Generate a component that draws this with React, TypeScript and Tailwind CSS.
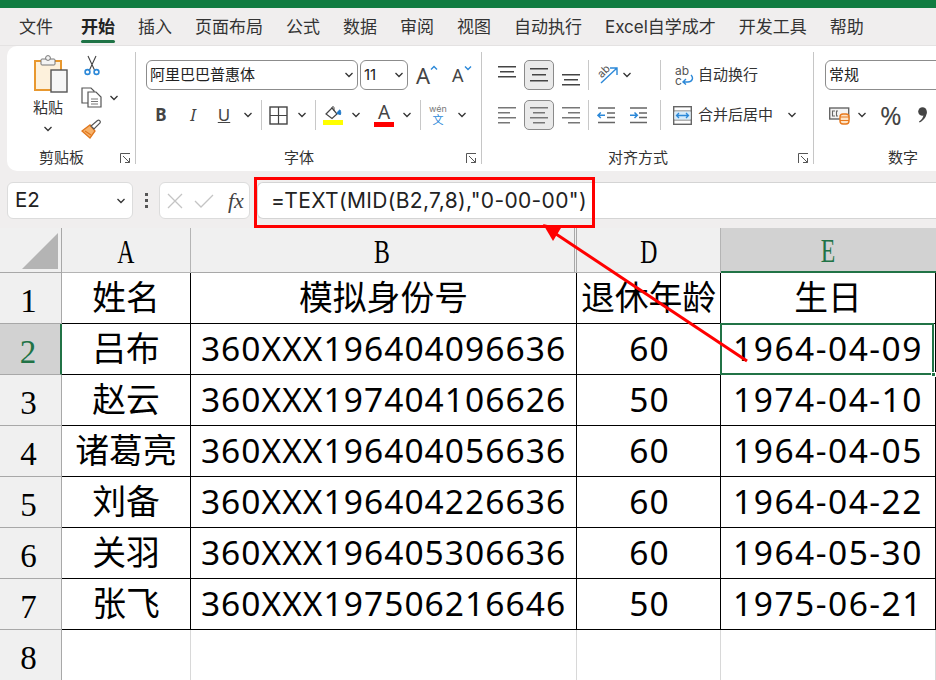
import React from "react";

const CJK = "font-['Inter','Noto_Sans_CJK_SC',sans-serif]";

function Chev({ className = "" }: { className?: string }) {
  return (
    <svg width="10" height="6" viewBox="0 0 10 6" className={"shrink-0 " + className}>
      <path d="M1.5 1 L5 4.5 L8.5 1" fill="none" stroke="#333" strokeWidth="1.3" />
    </svg>
  );
}

function Launcher() {
  return (
    <svg width="11" height="11" viewBox="0 0 11 11" className="shrink-0">
      <path d="M0.5 10 V0.5 H10" fill="none" stroke="#555" strokeWidth="1" />
      <path d="M3 3 L9.5 9.5 M5 9.5 H9.5 V5" fill="none" stroke="#555" strokeWidth="1" />
    </svg>
  );
}

function VSep({ h = "h-[30px]" }: { h?: string }) {
  return <div className={"w-px bg-[#c8c8c8] shrink-0 " + h} />;
}

function Lines({ rows, box = false, color = "#444" }: { rows: [number, number, number][]; box?: boolean; color?: string }) {
  return (
    <div className={"w-[30px] h-[30px] flex items-center justify-center shrink-0 rounded-[5px] " + (box ? "bg-[#eaeaea] border border-[#8a8a8a]" : "")}>
      <svg width="20" height="24" viewBox="0 0 20 24">
        {rows.map(([x, y, w], i) => (
          <rect key={i} x={x} y={y} width={w} height="1.5" fill={color} />
        ))}
      </svg>
    </div>
  );
}

function PasteIcon() {
  return (
    <svg width="36" height="40" viewBox="0 0 36 40">
      <rect x="2" y="6" width="26" height="29" fill="#fdf1dc" stroke="#e8982f" strokeWidth="2" />
      <rect x="8" y="4" width="14" height="6" rx="1" fill="#f4f4f4" stroke="#777" strokeWidth="1" />
      <circle cx="15" cy="3" r="2.4" fill="#f4f4f4" stroke="#777" />
      <rect x="18" y="15" width="16" height="22" fill="#f6f6f6" stroke="#555" strokeWidth="1.4" />
    </svg>
  );
}

function Scissors() {
  return (
    <svg width="16" height="21" viewBox="0 0 16 21">
      <path d="M4 1 L10.5 15 M12 1 L5.5 15" fill="none" stroke="#444" strokeWidth="1.1" />
      <circle cx="3.5" cy="17" r="2.4" fill="none" stroke="#2b88d8" strokeWidth="1.6" />
      <circle cx="12.5" cy="17" r="2.4" fill="none" stroke="#2b88d8" strokeWidth="1.6" />
    </svg>
  );
}

function CopyIcon() {
  return (
    <svg width="21" height="21" viewBox="0 0 21 21">
      <path d="M1 1 H10 L13 4 V16 H1 Z" fill="#fff" stroke="#555" strokeWidth="1.2" />
      <path d="M7 5 H15 L20 10 V20 H7 Z" fill="#fff" stroke="#555" strokeWidth="1.2" />
      <path d="M10 12 H17 M10 14.5 H17 M10 17 H17" stroke="#777" strokeWidth="1" />
    </svg>
  );
}

function Brush() {
  return (
    <svg width="21" height="20" viewBox="0 0 21 20">
      <path d="M1 12 L9 6 L14 12 L9 19 Z" fill="#f6b26b" stroke="#e0761c" strokeWidth="1.3" />
      <path d="M4 12 L10 16" stroke="#e0761c" strokeWidth="1.2" />
      <path d="M10 7 L13 10 L19 4 C20 2 18 0.5 16.5 1.5 Z" fill="#fff" stroke="#555" strokeWidth="1.2" />
    </svg>
  );
}

function BordersIcon() {
  return (
    <svg width="19" height="19" viewBox="0 0 19 19">
      <rect x="1" y="1" width="17" height="17" fill="none" stroke="#444" strokeWidth="1.4" />
      <path d="M9.5 1 V18 M1 9.5 H18" stroke="#444" strokeWidth="1.2" />
    </svg>
  );
}

function FillIcon() {
  return (
    <svg width="20" height="21" viewBox="0 0 20 21">
      <path d="M3 9 L9 3 L14 9 L9 13.5 Z" fill="#fff" stroke="#444" strokeWidth="1.2" />
      <path d="M9 3 C9 1 11 1 11 3 V6" fill="none" stroke="#444" strokeWidth="1" />
      <path d="M14 9 C15 6 16 5 17 5 C18 7 18 9 17 10" fill="#1f78c8" stroke="#1f78c8" />
      <rect x="0" y="15" width="20" height="5" fill="#ffff00" />
    </svg>
  );
}

function OrientIcon() {
  return (
    <div className="relative w-[22px] h-[20px]">
      <span className="absolute left-[1px] top-[-1px] text-[11px] leading-[14px] text-[#555] -rotate-[45deg]">ab</span>
      <svg width="22" height="20" viewBox="0 0 22 20" className="absolute left-0 top-0">
        <path d="M5 18 L21 3 M14 3 H21 V10" fill="none" stroke="#2b88d8" strokeWidth="1.4" />
      </svg>
    </div>
  );
}

function Indent({ inc }: { inc?: boolean }) {
  return (
    <svg width="18" height="18" viewBox="0 0 18 18">
      <path d="M1 2 H18 M1 16.5 H18 M10 7 H18 M10 11.5 H18" stroke="#666" strokeWidth="1.5" />
      {inc ? (
        <path d="M1 9.3 H8 M5.5 6.5 L8.3 9.3 L5.5 12" fill="none" stroke="#2b88d8" strokeWidth="1.5" />
      ) : (
        <path d="M8 9.3 H1 M3.8 6.5 L1 9.3 L3.8 12" fill="none" stroke="#2b88d8" strokeWidth="1.5" />
      )}
    </svg>
  );
}

function WrapIcon() {
  return (
    <div className="relative w-[19px] h-[19px]">
      <div className="w-[15px] text-[12px] leading-[10px] text-[#555]">ab c</div>
      <svg width="19" height="19" viewBox="0 0 19 19" className="absolute left-0 top-0">
        <path d="M16 9 C19 12 17 16 13 16 H8 M11 13 L8 16 L11 18.5" fill="none" stroke="#2b88d8" strokeWidth="1.4" />
      </svg>
    </div>
  );
}

function MergeIcon() {
  return (
    <svg width="19" height="19" viewBox="0 0 19 19">
      <rect x="0.7" y="0.7" width="17.6" height="17.6" fill="#fff" stroke="#666" strokeWidth="1.4" />
      <path d="M1 5 H18 M1 14 H18" stroke="#666" strokeWidth="1.2" />
      <rect x="1.5" y="5.5" width="16" height="8" fill="#d6ebfa" />
      <path d="M3.5 9.5 H15.5 M6 7 L3.5 9.5 L6 12 M13 7 L15.5 9.5 L13 12" fill="none" stroke="#2b88d8" strokeWidth="1.3" />
    </svg>
  );
}

function CurrencyIcon() {
  return (
    <svg width="21" height="20" viewBox="0 0 21 20">
      <rect x="0.7" y="3" width="19" height="11" fill="#f4f4f4" stroke="#666" strokeWidth="1.4" />
      <path d="M6 6 H3.5 V11 H6 M9 6 H7.5 V11 H9" fill="none" stroke="#666" strokeWidth="1.1" />
      <rect x="11" y="9" width="9" height="10" rx="3" fill="#fde3c5" stroke="#e8791c" strokeWidth="1.4" />
      <path d="M11 12 H20 M11 15.5 H20" stroke="#e8791c" strokeWidth="1.2" />
    </svg>
  );
}

function CommaIcon() {
  return (
    <svg width="11" height="16" viewBox="0 0 11 16">
      <circle cx="5.5" cy="4.5" r="4.3" fill="#444" />
      <path d="M9.8 4.5 C10 9 7 13.5 2.5 15.5 L2 14.5 C5 12.5 6.5 10 6.5 7.5 Z" fill="#444" />
    </svg>
  );
}

function Combo({ text, className, chev = true }: { text: string; className: string; chev?: boolean }) {
  return (
    <div className={"h-[30px] bg-white border border-[#8c8c8c] rounded-[6px] flex items-center justify-between pl-[3px] pr-[3px] text-[15px] text-[#222] " + className}>
      <span>{text}</span>
      {chev && <Chev />}
    </div>
  );
}

function Group({ width, label, launcher = true, sep = true, children }: { width: string; label: string; launcher?: boolean; sep?: boolean; children: React.ReactNode }) {
  return (
    <div className={"relative flex flex-col shrink-0 h-full " + width}>
      <div className="flex-1 min-h-0">{children}</div>
      <div className={"h-[23px] flex items-start justify-center text-[15px] leading-[20px] text-[#333] " + (launcher ? "pr-[20px]" : "")}>{label}</div>
      {launcher && (
        <div className="absolute right-[5px] bottom-[7px]">
          <Launcher />
        </div>
      )}
      {sep && <div className="absolute right-0 top-[6px] bottom-[7px] w-px bg-[#c6c6c6]" />}
    </div>
  );
}

const tabs = ["文件", "开始", "插入", "页面布局", "公式", "数据", "审阅", "视图", "自动执行", "Excel自学成才", "开发工具", "帮助"];

const topA: [number, number, number][] = [[1, 3, 18], [3, 8, 14], [1, 13, 18]];
const midA: [number, number, number][] = [[1, 5, 18], [3, 11, 14], [1, 17, 18]];
const botA: [number, number, number][] = [[1, 11, 18], [3, 16, 14], [1, 21, 18]];
const leftA: [number, number, number][] = [[1, 4, 18], [1, 9, 12], [1, 14, 18], [1, 19, 12]];
const centerA: [number, number, number][] = [[1, 4, 18], [4, 9, 12], [1, 14, 18], [4, 19, 12]];
const rightA: [number, number, number][] = [[1, 4, 18], [7, 9, 12], [1, 14, 18], [7, 19, 12]];

const rows: [string, string, string, string][] = [
  ["吕布", "360XXX196404096636", "60", "1964-04-09"],
  ["赵云", "360XXX197404106626", "50", "1974-04-10"],
  ["诸葛亮", "360XXX196404056636", "60", "1964-04-05"],
  ["刘备", "360XXX196404226636", "60", "1964-04-22"],
  ["关羽", "360XXX196405306636", "60", "1964-05-30"],
  ["张飞", "360XXX197506216646", "50", "1975-06-21"],
];

function ColHead({ ch, active, sep = "border-r border-[#b4b4b4]" }: { ch: string; active?: boolean; sep?: string }) {
  return (
    <div className={"flex items-center justify-center border-b " + (active ? "bg-[#d2d2d2] border-[#217346] border-b-2 text-[#217346]" : "bg-[#f0f0f0] border-[#a8a8a8] text-black " + sep)}>
      <span className="font-['Liberation_Serif',serif] text-[33px] leading-none scale-x-[0.72] mt-[4px]">{ch}</span>
    </div>
  );
}

function RowHead({ n, active }: { n: number; active?: boolean }) {
  return (
    <div className={"flex items-center justify-center pr-[4px] border-b border-r border-[#a8a8a8] " + (active ? "bg-[#d2d2d2] text-[#217346] border-r-2 border-r-[#217346]" : "bg-[#f0f0f0] text-black")}>
      <span className="font-['Liberation_Serif',serif] text-[33px] leading-none mt-[6px]">{n}</span>
    </div>
  );
}

function Cell({ children, num }: { children?: React.ReactNode; num?: string }) {
  return (
    <div className={"flex items-center justify-center border-r border-b border-black leading-none text-black whitespace-nowrap " + (num ? "font-['Noto_Sans',sans-serif] text-[33.5px] " + num : "text-[33.8px]")}>
      {children}
    </div>
  );
}

export default function App() {
  return (
    <div className={"relative w-[936px] h-[680px] overflow-hidden bg-white " + CJK}>
      <div className="h-2 bg-[#107c41]" />
      <div className="h-[38px] bg-[#f0eeee] flex items-start pl-[19px] gap-[23px] text-[17px] text-[#333] border-b border-[#e4e2e2]">
        {tabs.map((t) => (
          <div key={t} className={"relative h-[37px] pt-[7px] leading-[24px] whitespace-nowrap " + (t === "开始" ? "font-bold text-[#222] ml-[5px]" : "")}>
            {t}
            {t === "开始" && <div className="absolute left-0 right-0 top-[32px] h-[3px] rounded-sm bg-[#1f7346]" />}
          </div>
        ))}
      </div>

      <div className="h-[125px] bg-[#f0eeee] pl-[7px]">
        <div className="h-full bg-white rounded-l-[10px] flex">
          <Group width="w-[129px]" label="剪贴板">
            <div className="flex pl-[21px] pt-[9px]">
              <div className="w-[40px] flex flex-col items-center">
                <div className="ml-[6px]"><PasteIcon /></div>
                <div className="text-[15px] leading-[20px] text-[#333] mt-[3px]">粘贴</div>
                <Chev className="mt-[8px]" />
              </div>
              <div className="flex flex-col ml-[13px]">
                <div className="ml-[3px]"><Scissors /></div>
                <div className="flex items-center mt-[11px]">
                  <CopyIcon />
                  <Chev className="ml-[7px]" />
                </div>
                <div className="mt-[11px]">
                  <Brush />
                </div>
              </div>
            </div>
          </Group>

          <Group width="w-[346px]" label="字体">
            <div className="pl-[10px] pt-[14px]">
              <div className="flex items-center">
                <Combo text="阿里巴巴普惠体" className="w-[212px]" />
                <Combo text="11" className="w-[48px] ml-[2px]" />
                <span className="text-[22px] leading-none text-[#444] ml-[8px] font-['Noto_Sans',sans-serif]">A</span>
                <svg width="8" height="6" viewBox="0 0 8 6" className="mb-[14px]"><path d="M1 4.5 L4 1.5 L7 4.5" fill="none" stroke="#2b88d8" strokeWidth="1.4" /></svg>
                <span className="text-[18px] leading-none text-[#444] ml-[14px] font-['Noto_Sans',sans-serif]">A</span>
                <svg width="8" height="6" viewBox="0 0 8 6" className="mb-[14px]"><path d="M1 1.5 L4 4.5 L7 1.5" fill="none" stroke="#2b88d8" strokeWidth="1.4" /></svg>
              </div>
              <div className="flex items-center mt-[10px] h-[30px] text-[#444]">
                <span className="w-[14px] ml-[8px] text-[17px] font-bold text-center font-['Noto_Sans',sans-serif]">B</span>
                <span className="w-[14px] ml-[18px] text-[17px] italic text-center font-['Noto_Sans',sans-serif]">I</span>
                <span className="w-[14px] ml-[17px] text-[17px] underline text-center font-['Noto_Sans',sans-serif]">U</span>
                <Chev className="ml-[12px]" />
                <div className="ml-[8px] mr-[7px]"><VSep /></div>
                <BordersIcon />
                <Chev className="ml-[9px]" />
                <div className="ml-[8px] mr-[7px]"><VSep /></div>
                <FillIcon />
                <Chev className="ml-[8px]" />
                <div className="relative w-[20px] h-[24px] ml-[13px] flex flex-col items-center">
                  <span className="text-[19px] leading-[19px] text-[#444] font-['Noto_Sans',sans-serif]">A</span>
                  <div className="w-[20px] h-[5px] bg-[#ff0000] mt-[0px]" />
                </div>
                <Chev className="ml-[8px]" />
                <div className="ml-[8px] mr-[7px]"><VSep /></div>
                <div className="w-[20px] flex flex-col items-center leading-none">
                  <span className="text-[9px] text-[#777] leading-[10px]">wén</span>
                  <span className="text-[11px] text-[#2b88d8] leading-[13px]">文</span>
                </div>
                <Chev className="ml-[9px]" />
              </div>
            </div>
          </Group>

          <Group width="w-[332px]" label="对齐方式">
            <div className="pl-[10px] pt-[14px]">
              <div className="flex items-center h-[30px]">
                <Lines rows={topA} />
                <div className="ml-[2px]"><Lines rows={midA} box /></div>
                <div className="ml-[2px]"><Lines rows={botA} /></div>
                <div className="ml-[2px]"><VSep /></div>
                <div className="ml-[7px]"><OrientIcon /></div>
                <Chev className="ml-[4px]" />
                <div className="ml-[28px]"><VSep /></div>
                <div className="ml-[14px]"><WrapIcon /></div>
                <span className="ml-[4px] text-[15px] text-[#333]">自动换行</span>
              </div>
              <div className="flex items-center h-[30px] mt-[10px]">
                <Lines rows={leftA} color="#777" />
                <div className="ml-[2px]"><Lines rows={centerA} box color="#777" /></div>
                <div className="ml-[2px]"><Lines rows={rightA} color="#777" /></div>
                <div className="ml-[2px]"><VSep /></div>
                <div className="ml-[8px]"><Indent /></div>
                <div className="ml-[14px]"><Indent inc /></div>
                <div className="ml-[13px]"><VSep /></div>
                <div className="ml-[12px]"><MergeIcon /></div>
                <span className="ml-[6px] text-[15px] text-[#333]">合并后居中</span>
                <Chev className="ml-[14px]" />
              </div>
            </div>
          </Group>

          <Group width="w-[178px]" label="数字" launcher={false} sep={false}>
            <div className="pl-[11px] pt-[14px]">
              <Combo text="常规" className="w-[167px]" chev={false} />
              <div className="flex items-center h-[30px] mt-[10px] text-[#444]">
                <div className="ml-[4px]"><CurrencyIcon /></div>
                <Chev className="ml-[7px]" />
                <span className="ml-[13px] text-[26px] leading-none font-['Noto_Sans',sans-serif]">%</span>
                <div className="ml-[15px] mt-[-1px]"><CommaIcon /></div>
              </div>
            </div>
          </Group>
        </div>
      </div>

      <div className="h-[57px] bg-[#f0eeee] flex items-start pt-[11px] pl-[7px]">
        <div className="w-[126px] h-[37px] bg-white border border-[#dcdcdc] rounded-[6px] flex items-center justify-between pl-[7px] pr-[6px] text-[20.5px] text-[#222]">
          <span>E2</span>
          <Chev />
        </div>
        <div className="w-[26px] h-[37px] flex flex-col items-center justify-center gap-[3px]">
          <div className="w-[3px] h-[3px] bg-[#555]" />
          <div className="w-[3px] h-[3px] bg-[#555]" />
          <div className="w-[3px] h-[3px] bg-[#555]" />
        </div>
        <div className="w-[91px] h-[37px] bg-white border border-[#dcdcdc] rounded-[6px] flex items-center pl-[7px]">
          <svg width="16" height="16" viewBox="0 0 16 16"><path d="M1 1 L15 15 M15 1 L1 15" stroke="#c4c4c4" strokeWidth="1.3" /></svg>
          <svg width="20" height="16" viewBox="0 0 20 16" className="ml-[11px]"><path d="M1 8 L7 14 L19 2" fill="none" stroke="#c4c4c4" strokeWidth="1.3" /></svg>
          <span className="ml-[14px] text-[22px] italic text-[#444] font-['Liberation_Serif',serif] leading-none">fx</span>
        </div>
        <div className="ml-[7px] flex-1 h-[37px] bg-white border-y border-l border-[#d4d4d4] rounded-l-[6px] flex items-center pl-[13px] text-[21px] tracking-[0.35px] text-[#222] whitespace-nowrap">
          =TEXT(MID(B2,7,8),"0-00-00")
        </div>
      </div>

      <div className="grid grid-cols-[62px_129px_386px_144px_215px] grid-rows-[45px_repeat(8,51px)]">
        <div className="relative bg-[#f0f0f0] border-r border-b border-[#a8a8a8]">
          <svg width="36" height="36" viewBox="0 0 36 36" className="absolute left-[22px] bottom-[3px]"><path d="M36 0 V36 H0 Z" fill="#b4b4b4" /></svg>
        </div>
        <ColHead ch="A" />
        <ColHead ch="B" sep="border-r-[3px] border-double border-[#a8a8a8]" />
        <ColHead ch="D" />
        <ColHead ch="E" active />

        <RowHead n={1} />
        <Cell>姓名</Cell>
        <Cell>模拟身份号</Cell>
        <Cell>退休年龄</Cell>
        <Cell>生日</Cell>

        {rows.map((r, i) => (
          <React.Fragment key={r[1]}>
            <RowHead n={i + 2} active={i === 0} />
            <Cell>{r[0]}</Cell>
            <Cell num="tracking-[1.05px]">{r[1]}</Cell>
            <Cell num="tracking-[1.2px] pl-[2px]">{r[2]}</Cell>
            <Cell num="tracking-[1.5px]">{r[3]}</Cell>
          </React.Fragment>
        ))}

        <RowHead n={8} />
        <div className="border-r border-[#d8d8d8]" />
        <div className="border-r border-[#d8d8d8]" />
        <div className="border-r border-[#d8d8d8]" />
        <div className="border-r border-[#d8d8d8]" />
      </div>

      {/* selection */}
      <div className="absolute left-[720px] top-[323px] w-[214px] h-[52px] border-2 border-[#217346]" />
      <div className="absolute left-[931px] top-[372px] w-[5px] h-[5px] bg-[#217346] border border-white" />

      {/* annotation */}
      <div className="absolute left-[254px] top-[177px] w-[341px] h-[51px] border-[3px] border-[#ff0000]" />
      <svg className="absolute left-0 top-0 pointer-events-none" width="936" height="680" viewBox="0 0 936 680">
        <path d="M747 361 L553 232" stroke="#ff0000" strokeWidth="3" />
        <path d="M543 224 L561 228 L553 241 Z" fill="#ff0000" />
      </svg>
    </div>
  );
}
